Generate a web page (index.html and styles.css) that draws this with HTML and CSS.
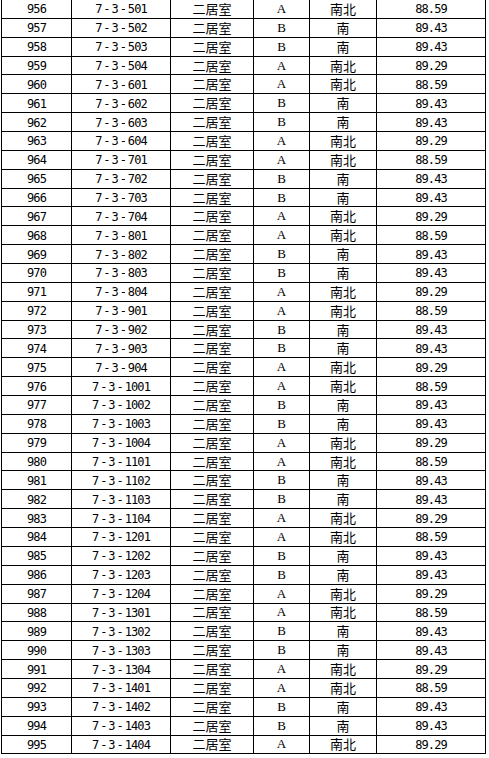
FILE: index.html
```html
<!DOCTYPE html>
<html lang="zh">
<head>
<meta charset="utf-8">
<link rel="stylesheet" href="styles.css">
</head>
<body>
<div class="sheet">
<div class="c n">956</div><div class="c n">7<span class="h">-</span>3<span class="h">-</span>501</div><div class="c z">二居室</div><div class="c l">A</div><div class="c z">南北</div><div class="c n">88.59</div>
<div class="c n">957</div><div class="c n">7<span class="h">-</span>3<span class="h">-</span>502</div><div class="c z">二居室</div><div class="c l">B</div><div class="c z">南</div><div class="c n">89.43</div>
<div class="c n">958</div><div class="c n">7<span class="h">-</span>3<span class="h">-</span>503</div><div class="c z">二居室</div><div class="c l">B</div><div class="c z">南</div><div class="c n">89.43</div>
<div class="c n">959</div><div class="c n">7<span class="h">-</span>3<span class="h">-</span>504</div><div class="c z">二居室</div><div class="c l">A</div><div class="c z">南北</div><div class="c n">89.29</div>
<div class="c n">960</div><div class="c n">7<span class="h">-</span>3<span class="h">-</span>601</div><div class="c z">二居室</div><div class="c l">A</div><div class="c z">南北</div><div class="c n">88.59</div>
<div class="c n">961</div><div class="c n">7<span class="h">-</span>3<span class="h">-</span>602</div><div class="c z">二居室</div><div class="c l">B</div><div class="c z">南</div><div class="c n">89.43</div>
<div class="c n">962</div><div class="c n">7<span class="h">-</span>3<span class="h">-</span>603</div><div class="c z">二居室</div><div class="c l">B</div><div class="c z">南</div><div class="c n">89.43</div>
<div class="c n">963</div><div class="c n">7<span class="h">-</span>3<span class="h">-</span>604</div><div class="c z">二居室</div><div class="c l">A</div><div class="c z">南北</div><div class="c n">89.29</div>
<div class="c n">964</div><div class="c n">7<span class="h">-</span>3<span class="h">-</span>701</div><div class="c z">二居室</div><div class="c l">A</div><div class="c z">南北</div><div class="c n">88.59</div>
<div class="c n">965</div><div class="c n">7<span class="h">-</span>3<span class="h">-</span>702</div><div class="c z">二居室</div><div class="c l">B</div><div class="c z">南</div><div class="c n">89.43</div>
<div class="c n">966</div><div class="c n">7<span class="h">-</span>3<span class="h">-</span>703</div><div class="c z">二居室</div><div class="c l">B</div><div class="c z">南</div><div class="c n">89.43</div>
<div class="c n">967</div><div class="c n">7<span class="h">-</span>3<span class="h">-</span>704</div><div class="c z">二居室</div><div class="c l">A</div><div class="c z">南北</div><div class="c n">89.29</div>
<div class="c n">968</div><div class="c n">7<span class="h">-</span>3<span class="h">-</span>801</div><div class="c z">二居室</div><div class="c l">A</div><div class="c z">南北</div><div class="c n">88.59</div>
<div class="c n">969</div><div class="c n">7<span class="h">-</span>3<span class="h">-</span>802</div><div class="c z">二居室</div><div class="c l">B</div><div class="c z">南</div><div class="c n">89.43</div>
<div class="c n">970</div><div class="c n">7<span class="h">-</span>3<span class="h">-</span>803</div><div class="c z">二居室</div><div class="c l">B</div><div class="c z">南</div><div class="c n">89.43</div>
<div class="c n">971</div><div class="c n">7<span class="h">-</span>3<span class="h">-</span>804</div><div class="c z">二居室</div><div class="c l">A</div><div class="c z">南北</div><div class="c n">89.29</div>
<div class="c n">972</div><div class="c n">7<span class="h">-</span>3<span class="h">-</span>901</div><div class="c z">二居室</div><div class="c l">A</div><div class="c z">南北</div><div class="c n">88.59</div>
<div class="c n">973</div><div class="c n">7<span class="h">-</span>3<span class="h">-</span>902</div><div class="c z">二居室</div><div class="c l">B</div><div class="c z">南</div><div class="c n">89.43</div>
<div class="c n">974</div><div class="c n">7<span class="h">-</span>3<span class="h">-</span>903</div><div class="c z">二居室</div><div class="c l">B</div><div class="c z">南</div><div class="c n">89.43</div>
<div class="c n">975</div><div class="c n">7<span class="h">-</span>3<span class="h">-</span>904</div><div class="c z">二居室</div><div class="c l">A</div><div class="c z">南北</div><div class="c n">89.29</div>
<div class="c n">976</div><div class="c n">7<span class="h">-</span>3<span class="h">-</span>1001</div><div class="c z">二居室</div><div class="c l">A</div><div class="c z">南北</div><div class="c n">88.59</div>
<div class="c n">977</div><div class="c n">7<span class="h">-</span>3<span class="h">-</span>1002</div><div class="c z">二居室</div><div class="c l">B</div><div class="c z">南</div><div class="c n">89.43</div>
<div class="c n">978</div><div class="c n">7<span class="h">-</span>3<span class="h">-</span>1003</div><div class="c z">二居室</div><div class="c l">B</div><div class="c z">南</div><div class="c n">89.43</div>
<div class="c n">979</div><div class="c n">7<span class="h">-</span>3<span class="h">-</span>1004</div><div class="c z">二居室</div><div class="c l">A</div><div class="c z">南北</div><div class="c n">89.29</div>
<div class="c n">980</div><div class="c n">7<span class="h">-</span>3<span class="h">-</span>1101</div><div class="c z">二居室</div><div class="c l">A</div><div class="c z">南北</div><div class="c n">88.59</div>
<div class="c n">981</div><div class="c n">7<span class="h">-</span>3<span class="h">-</span>1102</div><div class="c z">二居室</div><div class="c l">B</div><div class="c z">南</div><div class="c n">89.43</div>
<div class="c n">982</div><div class="c n">7<span class="h">-</span>3<span class="h">-</span>1103</div><div class="c z">二居室</div><div class="c l">B</div><div class="c z">南</div><div class="c n">89.43</div>
<div class="c n">983</div><div class="c n">7<span class="h">-</span>3<span class="h">-</span>1104</div><div class="c z">二居室</div><div class="c l">A</div><div class="c z">南北</div><div class="c n">89.29</div>
<div class="c n">984</div><div class="c n">7<span class="h">-</span>3<span class="h">-</span>1201</div><div class="c z">二居室</div><div class="c l">A</div><div class="c z">南北</div><div class="c n">88.59</div>
<div class="c n">985</div><div class="c n">7<span class="h">-</span>3<span class="h">-</span>1202</div><div class="c z">二居室</div><div class="c l">B</div><div class="c z">南</div><div class="c n">89.43</div>
<div class="c n">986</div><div class="c n">7<span class="h">-</span>3<span class="h">-</span>1203</div><div class="c z">二居室</div><div class="c l">B</div><div class="c z">南</div><div class="c n">89.43</div>
<div class="c n">987</div><div class="c n">7<span class="h">-</span>3<span class="h">-</span>1204</div><div class="c z">二居室</div><div class="c l">A</div><div class="c z">南北</div><div class="c n">89.29</div>
<div class="c n">988</div><div class="c n">7<span class="h">-</span>3<span class="h">-</span>1301</div><div class="c z">二居室</div><div class="c l">A</div><div class="c z">南北</div><div class="c n">88.59</div>
<div class="c n">989</div><div class="c n">7<span class="h">-</span>3<span class="h">-</span>1302</div><div class="c z">二居室</div><div class="c l">B</div><div class="c z">南</div><div class="c n">89.43</div>
<div class="c n">990</div><div class="c n">7<span class="h">-</span>3<span class="h">-</span>1303</div><div class="c z">二居室</div><div class="c l">B</div><div class="c z">南</div><div class="c n">89.43</div>
<div class="c n">991</div><div class="c n">7<span class="h">-</span>3<span class="h">-</span>1304</div><div class="c z">二居室</div><div class="c l">A</div><div class="c z">南北</div><div class="c n">89.29</div>
<div class="c n">992</div><div class="c n">7<span class="h">-</span>3<span class="h">-</span>1401</div><div class="c z">二居室</div><div class="c l">A</div><div class="c z">南北</div><div class="c n">88.59</div>
<div class="c n">993</div><div class="c n">7<span class="h">-</span>3<span class="h">-</span>1402</div><div class="c z">二居室</div><div class="c l">B</div><div class="c z">南</div><div class="c n">89.43</div>
<div class="c n">994</div><div class="c n">7<span class="h">-</span>3<span class="h">-</span>1403</div><div class="c z">二居室</div><div class="c l">B</div><div class="c z">南</div><div class="c n">89.43</div>
<div class="c n">995</div><div class="c n">7<span class="h">-</span>3<span class="h">-</span>1404</div><div class="c z">二居室</div><div class="c l">A</div><div class="c z">南北</div><div class="c n">89.29</div>
</div>
</body>
</html>
```
FILE: styles.css
```css
html, body {
  margin: 0;
  padding: 0;
  background: #fff;
}
body {
  padding-left: 1px;
}
.sheet {
  display: grid;
  grid-template-columns: 70px 99px 83px 56px 67px 109px;
  grid-auto-rows: 18.87px;
  width: 484px;
  border-left: 1px solid #000;
  color: #000;
}
.c {
  border-right: 1px solid #000;
  border-bottom: 1px solid #000;
  display: flex;
  align-items: center;
  justify-content: center;
  white-space: nowrap;
  line-height: 1;
  min-height: 0;
}
.n {
  font-family: "DejaVu Sans Mono", monospace;
  font-size: 12px;
  letter-spacing: -0.9px;
  padding-top: 1px;
}
.h {
  display: inline-block;
  width: 10px;
  text-align: center;
}
.z {
  font-family: "Noto Sans CJK SC", sans-serif;
  font-size: 13px;
  line-height: 13px;
  padding-bottom: 1px;
}
.l {
  font-family: "Liberation Serif", serif;
  font-size: 13px;
  padding-bottom: 1px;
}
```
